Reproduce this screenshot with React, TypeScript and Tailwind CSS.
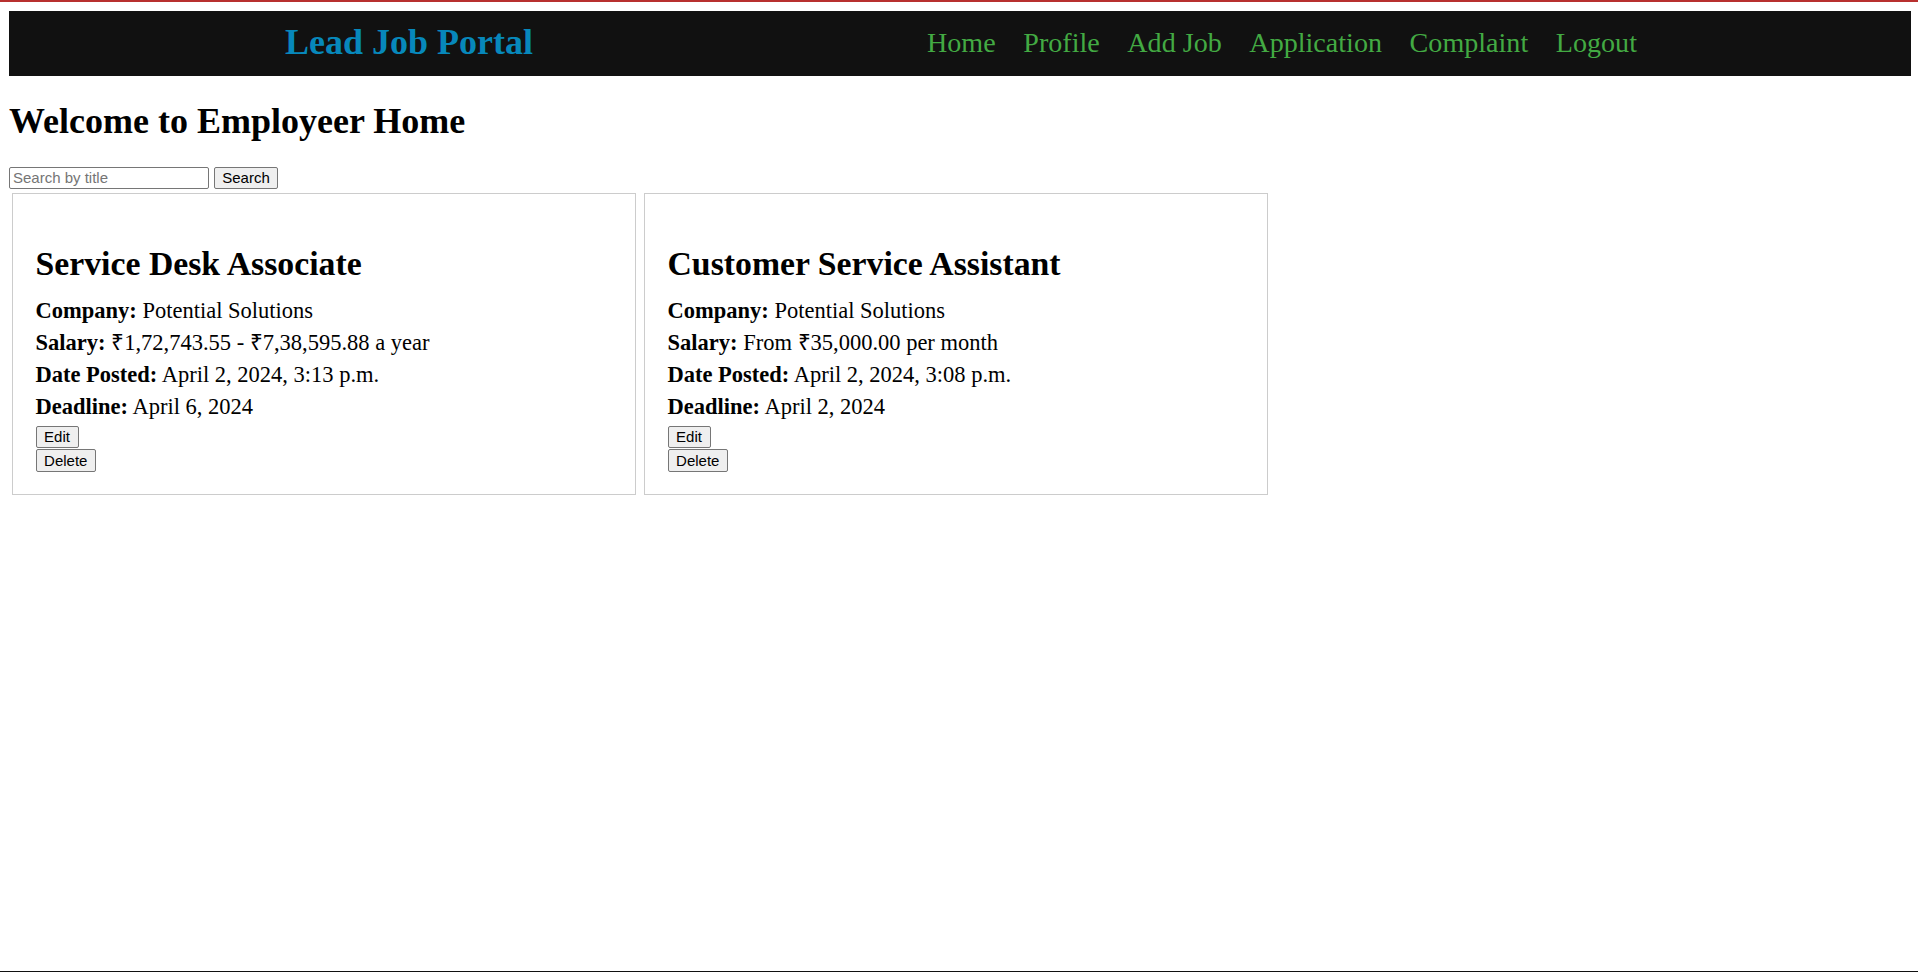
import React from "react";

type Job = {
  title: string;
  company: string;
  salary: string;
  posted: string;
  deadline: string;
};

const jobs: Job[] = [
  {
    title: "Service Desk Associate",
    company: "Potential Solutions",
    salary: "₹1,72,743.55 - ₹7,38,595.88 a year",
    posted: "April 2, 2024, 3:13 p.m.",
    deadline: "April 6, 2024",
  },
  {
    title: "Customer Service Assistant",
    company: "Potential Solutions",
    salary: "From ₹35,000.00 per month",
    posted: "April 2, 2024, 3:08 p.m.",
    deadline: "April 2, 2024",
  },
];

const navLinks = ["Home", "Profile", "Add Job", "Application", "Complaint", "Logout"];

function Row({ label, value }: { label: string; value: string }) {
  return (
    <p className="text-[22.5px] leading-[26px] text-black whitespace-nowrap">
      <b className="font-bold">{label}</b> {value}
    </p>
  );
}

function SmallButton({ children }: { children: React.ReactNode }) {
  return (
    <button className="h-[22.5px] px-[7.6px] bg-[#efefef] border border-[#767676] rounded-[2px] text-[15px] leading-[18px] text-black font-['Liberation_Sans',Arial,sans-serif]">
      {children}
    </button>
  );
}

function Card({ job }: { job: Job }) {
  return (
    <div className="w-[624px] border border-[#cccccc] px-[22.5px] pt-[22.5px] pb-[22.3px]">
      <h2 className="mt-[27.8px] text-[33.75px] font-bold leading-[39px] text-black whitespace-nowrap">
        {job.title}
      </h2>
      <div className="mt-[15.4px] flex flex-col gap-[5.9px]">
        <Row label="Company:" value={job.company} />
        <Row label="Salary:" value={job.salary} />
        <Row label="Date Posted:" value={job.posted} />
        <Row label="Deadline:" value={job.deadline} />
      </div>
      <div className="mt-[5.9px] flex flex-col items-start gap-[1px]">
        <SmallButton>Edit</SmallButton>
        <SmallButton>Delete</SmallButton>
      </div>
    </div>
  );
}

export default function App() {
  return (
    <div className="h-[972px] w-full overflow-hidden bg-white border-t-2 border-t-[#b8302f] border-b border-b-[#111111] font-['Liberation_Serif','Times_New_Roman',serif] text-black">
      <header className="ml-[9px] mr-[7px] mt-[9px] h-[65px] bg-[#111111] flex items-center">
        <div className="ml-[276px] mb-[2.6px] text-[36px] font-bold leading-[40px] text-[#0788bb] whitespace-nowrap">
          Lead Job Portal
        </div>
        <nav className="ml-[394px] mb-[1.5px] flex items-center gap-[27.6px]">
          {navLinks.map((l) => (
            <a
              key={l}
              className="text-[28.1px] leading-[32px] text-[#43aa43] whitespace-nowrap cursor-pointer"
            >
              {l}
            </a>
          ))}
        </nav>
      </header>

      <h1 className="ml-[9px] mt-[25px] text-[36px] font-bold leading-[40px]">
        Welcome to Employeer Home
      </h1>

      <div className="ml-[9px] mt-[25.5px] flex items-center gap-[5px]">
        <input
          type="text"
          placeholder="Search by title"
          className="w-[200px] h-[22px] px-[3px] border border-[#767676] rounded-[2px] bg-white text-[15px] text-black placeholder:text-[#757575] font-['Liberation_Sans',Arial,sans-serif] outline-none"
        />
        <button className="w-[64px] h-[22.5px] bg-[#efefef] border border-[#767676] rounded-[2px] text-[15px] leading-[18px] text-black font-['Liberation_Sans',Arial,sans-serif]">
          Search
        </button>
      </div>

      <div className="ml-[12px] mt-[3.5px] flex items-start gap-[8px]">
        {jobs.map((j) => (
          <Card key={j.title} job={j} />
        ))}
      </div>
    </div>
  );
}
